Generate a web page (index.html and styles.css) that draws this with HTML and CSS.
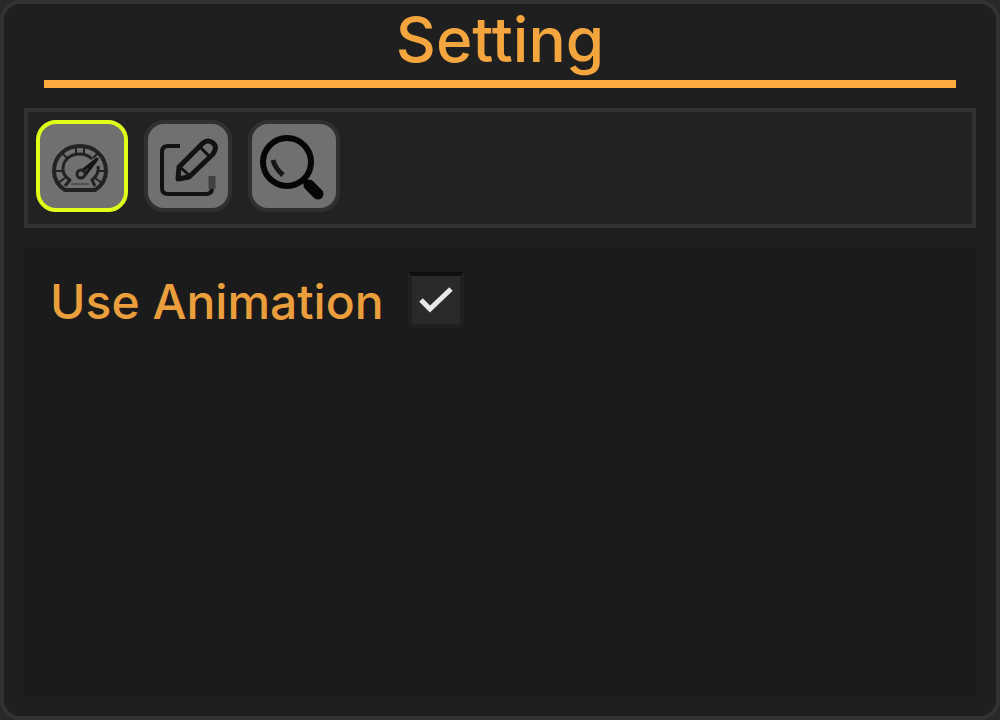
FILE: index.html
```html
<!DOCTYPE html>
<html lang="en">
<head>
<meta charset="utf-8">
<title>Setting</title>
<link rel="stylesheet" href="styles.css">
</head>
<body>
<main class="window">
  <h1 class="title">Setting</h1>
  <div class="toolbar" role="toolbar" aria-label="Setting pages">
    <button class="tool tool-active" type="button" aria-label="Performance">
      <svg class="icon" viewBox="0 0 84 84" fill="none" stroke="#222222" stroke-width="4" stroke-linejoin="round">
        <path d="M25 66C17 61 14 54 14 47C14 32 26 22 40 22S66 32 66 47C66 54 63 61 55 66Z"/>
        <path d="M25 62L30 56C25 53 23 50 23 45C23 36 30 30 40 30C45 30 49 32 52 35M58 42C59 47 57 52 52 56L55 62" stroke-width="3"/>
        <path d="M36 22V30M44 22V30M22 29L28 35M58 29L53 34M14 47H23M58 47H66M18 59L25 54M62 59L55 54" stroke-width="2"/>
        <path d="M42 47L57 35L45 51" stroke="#151515" stroke-width="3"/>
        <circle cx="41" cy="50" r="4" stroke-width="3"/>
        <path d="M31 60H49" stroke-width="2" stroke="#505050"/>
      </svg>
    </button>
    <button class="tool tool-narrow" type="button" aria-label="Edit">
      <svg class="icon" viewBox="0 0 80 84" fill="none" stroke="#121212" stroke-width="4" stroke-linejoin="round">
        <path d="M32 22H20Q14 22 14 28V64Q14 70 20 70H58Q64 70 64 64"/>
        <path d="M64 65V52" stroke="#404040" stroke-width="7"/>
        <path d="M30 55L31 43L55 19Q60 15 65 19T65 30L41 53Z" stroke-width="5"/>
        <path d="M52 23L62 33M32 43L42 52" stroke-width="3"/>
      </svg>
    </button>
    <button class="tool" type="button" aria-label="Search">
      <svg class="icon" viewBox="0 0 84 84" fill="none" stroke="#050505">
        <circle cx="35" cy="38" r="24" stroke-width="6"/>
        <path d="M21 36Q23 44 31 51" stroke="#161616" stroke-width="5"/>
        <path d="M51 55L58 62" stroke-width="6"/>
        <path d="M57 61L66 70" stroke-width="11" stroke-linecap="round"/>
      </svg>
    </button>
  </div>
  <section class="panel">
    <label class="option">
      <span class="option-text">Use Animation</span>
      <span class="check">
        <input class="check-box" type="checkbox" checked>
        <svg class="check-mark" viewBox="0 0 56 56" fill="none" stroke="#e8e8e8" stroke-width="5"><path d="M13 28L22 37L43 17"/></svg>
      </span>
    </label>
  </section>
</main>
</body>
</html>
```
FILE: styles.css
```css
* {
  box-sizing: border-box;
}

body {
  margin: 0;
  background: #282828;
  color: #ffab40;
  font-family: Inter, "Liberation Sans", sans-serif;
}

.window {
  display: flex;
  flex-direction: column;
  min-height: 100vh;
  padding: 0 20px 20px;
  border: 4px solid #323232;
  border-radius: 20px;
  background: #1f1f1f;
}

.title {
  margin: 0 20px 20px;
  padding-bottom: 4px;
  border-bottom: 8px solid #ffab40;
  color: #f5a53e;
  font-size: 62px;
  line-height: 72px;
  font-weight: 500;
  text-align: center;
}

.toolbar {
  display: flex;
  gap: 16px;
  margin-bottom: 20px;
  padding: 8px 8px 12px;
  border: 4px solid #323232;
  background: #222222;
}

.tool {
  width: 92px;
  height: 92px;
  padding: 0;
  border: 4px solid #303030;
  border-radius: 20px;
  background: #707070;
}

.tool-narrow {
  width: 88px;
}

.tool-active {
  border-color: #dfff18;
}

.icon {
  display: block;
  width: 100%;
  height: 100%;
}

.panel {
  flex: 1;
  padding: 24px 26px;
  background: #1b1b1b;
}

.option {
  display: inline-flex;
  align-items: center;
  gap: 24px;
  color: #eb9f3c;
  font-size: 48px;
  line-height: 52px;
  font-weight: 500;
}

.option-text {
  padding-top: 4px;
}

.check {
  display: grid;
}

.check-box,
.check-mark {
  grid-area: 1 / 1;
  width: 56px;
  height: 56px;
  margin: 0;
}

.check-box {
  appearance: none;
  border: 4px solid #202020;
  border-top-color: #0f0f0f;
  background: #2a2a2a;
}

.check-mark {
  visibility: hidden;
  pointer-events: none;
}

.check-box:checked + .check-mark {
  visibility: visible;
}
```
